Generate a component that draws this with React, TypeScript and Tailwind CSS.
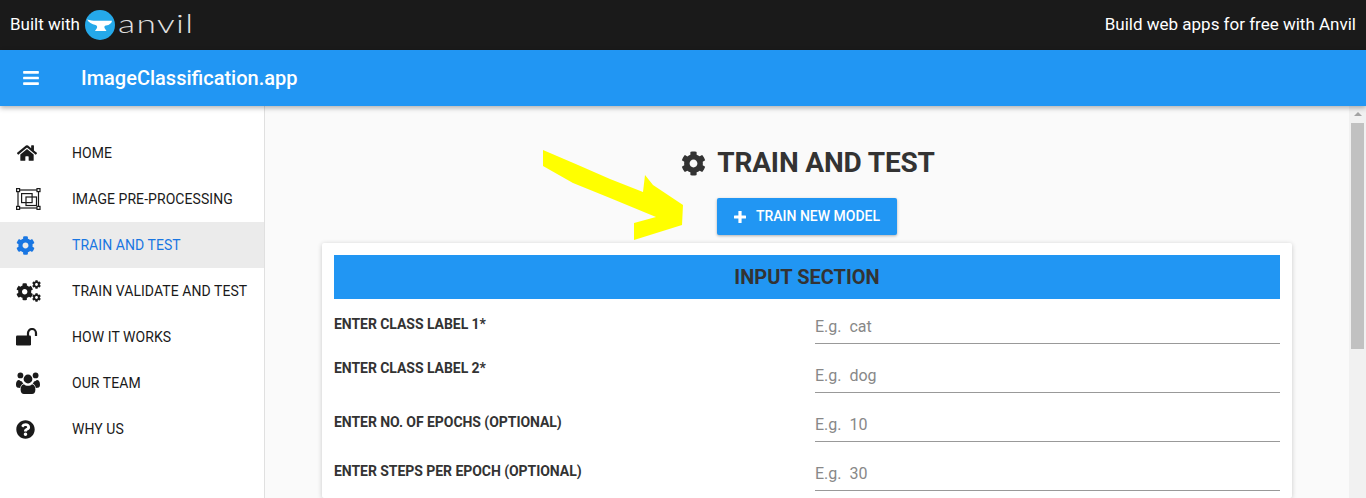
import { FaBars, FaCog, FaHome, FaQuestionCircle } from 'react-icons/fa';
import type { ReactNode } from 'react';

const GEAR =
  'M487.4 315.7l-42.6-24.6c4.3-23.2 4.3-47 0-70.2l42.6-24.6c4.9-2.8 7.1-8.6 5.5-14-11.1-35.6-30-67.8-54.7-94.6-3.8-4.1-10-5.1-14.8-2.3L380.8 110c-17.9-15.4-38.5-27.3-60.8-35.1V25.8c0-5.6-3.9-10.5-9.4-11.7-36.7-8.2-74.3-7.8-109.2 0-5.5 1.2-9.4 6.1-9.4 11.7V75c-22.2 7.9-42.8 19.8-60.8 35.1L88.7 85.5c-4.9-2.8-11-1.9-14.8 2.3-24.7 26.7-43.6 58.9-54.7 94.6-1.7 5.4.6 11.2 5.5 14L67.3 221c-4.3 23.2-4.3 47 0 70.2l-42.6 24.6c-4.9 2.8-7.1 8.6-5.5 14 11.1 35.6 30 67.8 54.7 94.6 3.8 4.1 10 5.1 14.8 2.3l42.6-24.6c17.9 15.4 38.5 27.3 60.8 35.1v49.2c0 5.6 3.9 10.5 9.4 11.7 36.7 8.2 74.3 7.8 109.2 0 5.5-1.2 9.4-6.1 9.4-11.7v-49.2c22.2-7.9 42.8-19.8 60.8-35.1l42.6 24.6c4.9 2.8 11 1.9 14.8-2.3 24.7-26.7 43.6-58.9 54.7-94.6 1.5-5.5-.7-11.3-5.6-14.1zM256 336c-44.1 0-80-35.9-80-80s35.9-80 80-80 80 35.9 80 80-35.9 80-80 80z';

function PreProcessIcon() {
  return (
    <svg width="25" height="22" viewBox="0 0 25 22" fill="none" stroke="#1a1a1a" strokeWidth="1.2">
      <rect x="2" y="2" width="20.5" height="18" />
      <rect x="0.6" y="0.6" width="3" height="3" fill="#fff" />
      <rect x="21" y="0.6" width="3" height="3" fill="#fff" />
      <rect x="0.6" y="18.4" width="3" height="3" fill="#fff" />
      <rect x="21" y="18.4" width="3" height="3" fill="#fff" />
      <rect x="5.6" y="5.6" width="10.5" height="9" />
      <rect x="10" y="9" width="10.5" height="8.5" />
    </svg>
  );
}

function CogsIcon() {
  return (
    <svg width="25" height="22" viewBox="0 0 25 22" fill="#1a1a1a">
      <path transform="translate(0 3) scale(0.034)" d={GEAR} />
      <path transform="translate(16 0) scale(0.0176)" d={GEAR} />
      <path transform="translate(16 13) scale(0.0176)" d={GEAR} />
    </svg>
  );
}

function UnlockIcon() {
  return (
    <svg width="22" height="18" viewBox="0 0 22 18">
      <rect x="0" y="7.5" width="15" height="10" rx="1.2" fill="#1a1a1a" />
      <path d="M12 8V5a4 4 0 0 1 8 0v3" fill="none" stroke="#1a1a1a" strokeWidth="2.2" />
    </svg>
  );
}

function TeamIcon() {
  return (
    <svg width="24" height="22" viewBox="0 0 24 22" fill="#1a1a1a">
      <circle cx="4.4" cy="3.4" r="2.9" />
      <circle cx="19.6" cy="3.4" r="2.9" />
      <circle cx="12" cy="7" r="4.4" />
      <path d="M0 13c0-4 1.6-5 3.2-5 .8 1 1.8 1.2 2.8 1.4.4 1 .8 1.6 1.4 2.2-1.8.8-3 2.3-3.2 4.4-2.4 0-4.2-.6-4.2-3z" />
      <path d="M24 13c0-4-1.6-5-3.2-5-.8 1-1.8 1.2-2.8 1.4-.4 1-.8 1.6-1.4 2.2 1.8.8 3 2.3 3.2 4.4 2.4 0 4.2-.6 4.2-3z" />
      <path d="M8 12.2c1 1 2.4 1.6 4 1.6s3-.6 4-1.6c2 .4 3.4 2 3.4 5.3 0 3-1.4 4.5-3.4 4.5H8c-2 0-3.4-1.5-3.4-4.5 0-3.3 1.4-4.900 3.400-5.300z" />
    </svg>
  );
}

function AnvilLogo() {
  return (
    <span className="flex items-center ml-[5px]">
      <svg width="30" height="30" viewBox="0 0 30 30">
        <circle cx="15" cy="15" r="15" fill="#25a9ea" />
        <path
          fill="#fff"
          d="M2 9.5c3 1 6 1.200 9 1.200h16c-.2 2.300-2.500 4.300-6 4.900-1.600.3-2 1.400-1.300 2.700l1.800 2.700H10l1.800-2.700c.8-1.400.2-2.800-1.300-3.300C7 14 3.500 12.500 2 9.500z"
        />
      </svg>
      <span className="ml-[3px] text-[26px] leading-none font-light tracking-[1px] text-[#e0e0e0] font-['Lato',sans-serif] relative top-[-2px] origin-left scale-x-[1.36]">
        anvil
      </span>
    </span>
  );
}

const navItems: { label: string; icon: ReactNode; active?: boolean }[] = [
  { label: 'HOME', icon: <FaHome size={20} className="ml-[1px]" /> },
  { label: 'IMAGE PRE-PROCESSING', icon: <PreProcessIcon /> },
  { label: 'TRAIN AND TEST', icon: <FaCog size={19} />, active: true },
  { label: 'TRAIN VALIDATE AND TEST', icon: <CogsIcon /> },
  { label: 'HOW IT WORKS', icon: <UnlockIcon /> },
  { label: 'OUR TEAM', icon: <TeamIcon /> },
  { label: 'WHY US', icon: <FaQuestionCircle size={19} /> },
];

const fields = [
  { label: 'ENTER CLASS LABEL 1*', hint: 'E.g.  cat', top: 'pt-[16px]', height: 'h-[45px]' },
  { label: 'ENTER CLASS LABEL 2*', hint: 'E.g.  dog', top: 'pt-[15px]', height: 'h-[49px]' },
  { label: 'ENTER NO. OF EPOCHS (OPTIONAL)', hint: 'E.g.  10', top: 'pt-[20px]', height: 'h-[49px]' },
  { label: 'ENTER STEPS PER EPOCH (OPTIONAL)', hint: 'E.g.  30', top: 'pt-[20px]', height: 'h-[49px]' },
];

export default function App() {
  return (
    <div className="h-[498px] w-[1366px] overflow-hidden flex flex-col bg-[#fafafa] font-['Roboto',sans-serif] text-[#333]">
      <div className="h-[50px] shrink-0 bg-[#1a1a1a] text-white flex items-center justify-between px-[10px] text-[17px]">
        <div className="flex items-center">
          <span>Built with</span>
          <AnvilLogo />
        </div>
        <span>Build web apps for free with Anvil</span>
      </div>

      <div className="relative z-10 h-[56px] shrink-0 bg-[#2196f3] text-white flex items-center shadow-[0_2px_5px_rgba(0,0,0,0.3)]">
        <div className="w-[81px] pl-[22px]">
          <FaBars size={18} />
        </div>
        <span className="text-[20px] font-medium">ImageClassification.app</span>
      </div>

      <div className="flex flex-1 min-h-0">
        <aside className="w-[265px] shrink-0 bg-white border-r border-[#e0e0e0] pt-[24px]">
          {navItems.map((item) => (
            <div
              key={item.label}
              className={
                item.active
                  ? 'h-[46px] flex items-center bg-[#ebebeb] text-[#1976e2]'
                  : 'h-[46px] flex items-center text-[#1a1a1a]'
              }
            >
              <span className="w-[72px] pl-[16px] flex items-center">{item.icon}</span>
              <span className="text-[14px] tracking-[0.06px]">{item.label}</span>
            </div>
          ))}
        </aside>

        <main className="relative flex-1 min-w-0 flex flex-col items-center pt-[39px]">
          <h1 className="flex items-center ml-[2px] text-[28px] leading-[36px] font-bold tracking-[-0.15px] text-[#333]">
            <FaCog size={25} className="mr-[11px]" />
            TRAIN AND TEST
          </h1>
          <button className="mt-[17px] w-[180px] h-[37px] flex items-center justify-center gap-[10px] rounded-[2px] bg-[#2196f3] text-white text-[14px] font-medium shadow-[0_1px_3px_rgba(0,0,0,0.3)]">
            <svg width="12" height="12" viewBox="0 0 12 12" fill="#fff">
              <rect x="4.4" y="0" width="3.2" height="12" rx="0.5" />
              <rect x="0" y="4.4" width="12" height="3.2" rx="0.5" />
            </svg>
            TRAIN NEW MODEL
          </button>

          <section className="mt-[8px] w-[970px] flex-1 bg-white rounded-[2px] px-[12px] pt-[12px] shadow-[0_1px_5px_rgba(0,0,0,0.2)]">
            <div className="h-[44px] bg-[#2196f3] flex items-center justify-center text-[20px] font-bold text-[#333]">
              INPUT SECTION
            </div>
            {fields.map((f) => (
              <div key={f.label} className={`flex justify-between ${f.height}`}>
                <div className={`text-[14px] leading-[18px] font-bold tracking-[-0.05px] text-[#333] ${f.top}`}>{f.label}</div>
                <div className="w-[465px] flex items-end">
                  <input
                    placeholder={f.hint}
                    className="w-full h-[36px] pt-[2px] border-b border-[#999] bg-transparent text-[16px] outline-none placeholder:text-[#888]"
                  />
                </div>
              </div>
            ))}
          </section>

          <svg className="absolute left-[278px] top-[43px]" width="142" height="92" viewBox="0 0 142 92">
            <polygon
              fill="#ffff00"
              points="0,1 35,16 67,30 100,43 102,26 110,36 140,56 139,76 91,91 91,74 113,68 67,49 30,34 0,17"
            />
          </svg>
        </main>

        <div className="relative w-[17px] shrink-0 bg-[#f1f1f1]">
          <div className="absolute left-[5px] top-[6px] w-0 h-0 border-x-[4px] border-b-[4px] border-x-transparent border-b-[#a3a3a3]" />
          <div className="absolute left-[2px] top-[17px] w-[13px] h-[226px] bg-[#c1c1c1]" />
        </div>
      </div>
    </div>
  );
}
